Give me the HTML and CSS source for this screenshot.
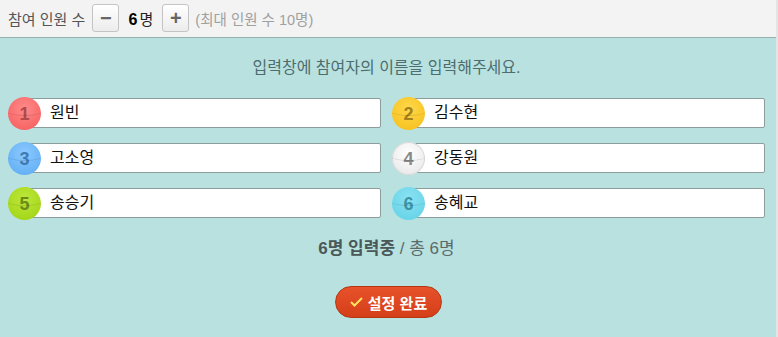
FILE: index.html
```html
<!DOCTYPE html>
<html lang="ko">
<head>
    <meta charset="UTF-8">
    <title>참여자 설정</title>
    <link rel="stylesheet" href="styles.css">
</head>
<body>
    <div class="page">
        <div class="topbar">
            <span class="label">참여 인원 수</span>
            <button class="step">&minus;</button>
            <span class="count"><b>6</b>명</span>
            <button class="step">+</button>
            <span class="limit">(최대 인원 수 10명)</span>
        </div>
        <div class="panel">
            <p class="guide">입력창에 참여자의 이름을 입력해주세요.</p>
            <div class="names">
                <div class="entry"><span class="ball red">1</span><div class="field">원빈</div></div>
                <div class="entry"><span class="ball yellow">2</span><div class="field">김수현</div></div>
                <div class="entry"><span class="ball blue">3</span><div class="field">고소영</div></div>
                <div class="entry"><span class="ball white">4</span><div class="field">강동원</div></div>
                <div class="entry"><span class="ball green">5</span><div class="field">송승기</div></div>
                <div class="entry"><span class="ball cyan">6</span><div class="field">송혜교</div></div>
            </div>
            <p class="status"><b>6명 입력중</b> / 총 6명</p>
            <div class="actions">
                <button class="done">
                    <svg class="check" width="13" height="10" viewBox="0 0 13 10"><path d="M1 5 L4.5 8.5 L12 1" fill="none" stroke="#ffe35a" stroke-width="2"/></svg>설정 완료
                </button>
            </div>
        </div>
    </div>
</body>
</html>
```

FILE: styles.css
```css
body {
    margin: 0;
    background: #e4e4e4;
    font-family: "Liberation Sans", "Noto Sans CJK KR", Arial, sans-serif;
}
.page {
    width: 776px;
    height: 337px;
    background: #b9e1e0;
}
.topbar {
    display: flex;
    align-items: center;
    height: 38px;
    padding-left: 8px;
    background: #f3f3f3;
    border-bottom: 1px solid #98b2b2;
    box-sizing: border-box;
    font-size: 15px;
    color: #555;
}
.label {
    margin-right: 7px;
}
.step {
    width: 27px;
    height: 28px;
    padding: 0;
    margin-top: -2px;
    background: linear-gradient(#ffffff, #ececec);
    border: 1px solid #c4c4c4;
    border-radius: 3px;
    font-family: "Liberation Sans", Arial, sans-serif;
    font-size: 20px;
    font-weight: bold;
    line-height: 24px;
    color: #666;
}
.count {
    width: 43px;
    text-align: center;
    color: #222;
}
.count b {
    font-size: 16px;
    color: #000;
    margin-right: 2px;
}
.limit {
    margin-left: 6px;
    font-size: 14.5px;
    color: #a0a0a0;
}
.panel {
    padding: 0 11px 0 8px;
}
.guide {
    margin: 0;
    padding: 16px 0 0;
    height: 44px;
    text-align: center;
    font-size: 16px;
    color: #4d6d6e;
}
.names {
    display: grid;
    grid-template-columns: 373px 373px;
    column-gap: 11px;
    row-gap: 12px;
}
.entry {
    position: relative;
    height: 33px;
    display: flex;
    align-items: flex-start;
}
.field {
    flex: 1;
    height: 30px;
    margin-left: 17px;
    padding-left: 24px;
    background: #fff;
    border: 1px solid #8d9c9c;
    border-radius: 2px;
    box-sizing: border-box;
    font-size: 16px;
    line-height: 28px;
    color: #111;
}
.ball {
    position: absolute;
    left: 0;
    top: -1px;
    width: 33px;
    height: 33px;
    border-radius: 50%;
    text-align: center;
    font-size: 18px;
    font-weight: bold;
    line-height: 35px;
    overflow: hidden;
}
.ball::after {
    content: "";
    position: absolute;
    left: -4px;
    right: -4px;
    top: 6px;
    height: 12px;
    border-bottom: 1px solid rgba(0, 0, 0, 0.12);
    border-radius: 50%;
}
.red { background: radial-gradient(circle at 50% 35%, #ff8a8a, #f55a5a); color: #b24a4a; }
.yellow { background: radial-gradient(circle at 50% 35%, #ffd84a, #f5bd17); color: #a4801c; }
.blue { background: radial-gradient(circle at 50% 35%, #8cc9ff, #5aaaf2); color: #3f7bb3; }
.white { background: radial-gradient(circle at 50% 35%, #ffffff, #e4e4e4); color: #8a8a8a; box-shadow: inset 0 0 0 1px #d8d8d8; }
.green { background: radial-gradient(circle at 50% 35%, #bde83a, #9fd112); color: #6b8c17; }
.cyan { background: radial-gradient(circle at 50% 35%, #8be2f2, #5fd0e6); color: #3c94a6; }
.status {
    margin: 0;
    padding-top: 13px;
    height: 52px;
    text-align: center;
    font-size: 17px;
    color: #5b6b6b;
}
.status b {
    color: #4a5858;
}
.actions {
    display: flex;
    justify-content: center;
}
.done {
    display: flex;
    align-items: center;
    height: 32px;
    padding: 0 14px;
    margin-left: 4px;
    background: linear-gradient(#e8522b, #d43e18);
    border: 1px solid #b63614;
    border-radius: 16px;
    font-family: "Liberation Sans", "Noto Sans CJK KR", Arial, sans-serif;
    font-size: 15px;
    font-weight: bold;
    color: #fff;
}
.check {
    margin-right: 5px;
}
```
